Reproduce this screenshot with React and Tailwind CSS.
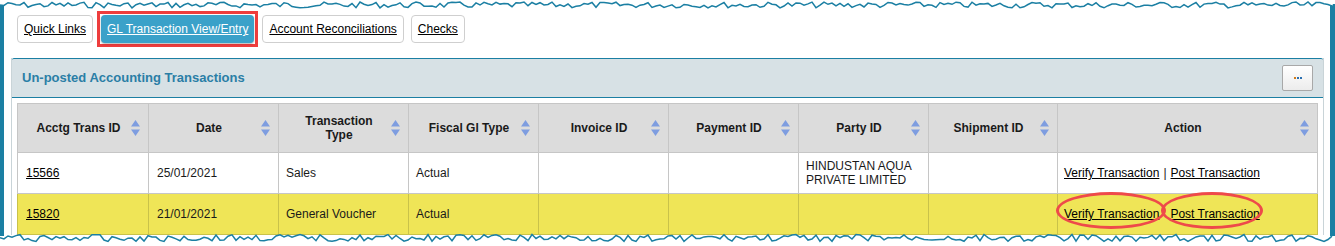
import React from "react";

const teal = "#1b7fa3";

// jagged "torn paper" line, deterministic
const tornPoints = (w, base, amp, seed) => {
  let s = seed;
  const rnd = () => {
    s = (s * 9301 + 49297) % 233280;
    return s / 233280;
  };
  const pts = [];
  for (let x = 0; x <= w; x += 4) {
    pts.push(`${x},${(base + (rnd() - 0.5) * amp).toFixed(1)}`);
  }
  return pts.join(" ");
};

const SortIcon = () => (
  <svg width="9" height="16" viewBox="0 0 9 16" className="shrink-0">
    <path d="M4.5 0 L9 6.5 L0 6.5 Z" fill="#7e9de0" />
    <path d="M0 9.5 L9 9.5 L4.5 16 Z" fill="#7e9de0" />
  </svg>
);

const cols = [
  { label: "Acctg Trans ID", w: "w-[131px]" },
  { label: "Date", w: "w-[130px]" },
  { label: "Transaction Type", w: "w-[130px]", two: true },
  { label: "Fiscal Gl Type", w: "w-[130px]" },
  { label: "Invoice ID", w: "w-[130px]" },
  { label: "Payment ID", w: "w-[130px]" },
  { label: "Party ID", w: "w-[130px]" },
  { label: "Shipment ID", w: "w-[129px]" },
  { label: "Action", w: "w-[260px]" },
];

const rows = [
  { id: "15566", date: "25/01/2021", type: "Sales", gl: "Actual", party: ["HINDUSTAN AQUA", "PRIVATE LIMITED"] },
  { id: "15820", date: "21/01/2021", type: "General Voucher", gl: "Actual", party: [], hl: true },
];

const Tab = ({ children, className = "" }) => (
  <button className={`h-[28px] px-[6px] rounded-[4px] border border-[#cfcfcf] bg-white text-[12px] text-black underline ${className}`}>
    {children}
  </button>
);

export default function App() {
  return (
    <div
      className="relative w-[1335px] h-[246px] bg-white overflow-hidden"
      style={{ fontFamily: "Arial, 'Liberation Sans', sans-serif" }}
    >
      <div className="flex h-full pt-[4px] pb-[10px]">
        <div className="w-[4px] bg-[#1b7fa3]" />
        <div className="flex-1">
          {/* tabs */}
          <div className="flex items-center gap-[4px] pl-[13px] pt-[7px]">
            <Tab>Quick Links</Tab>
            <div className="border-[3px] border-[#ee3d3d] p-[1px]">
              <button className="h-[28px] px-[6px] rounded-[4px] bg-[#3aa1c9] text-[12px] text-white underline shadow-[0_1px_2px_rgba(0,0,0,0.3)]">
                GL Transaction View/Entry
              </button>
            </div>
            <Tab>Account Reconciliations</Tab>
            <Tab className="ml-[3px]">Checks</Tab>
          </div>

          {/* panel */}
          <div className="ml-[7px] mt-[11px] w-[1313px] border-x border-[#c9d4d8]">
            <div className="h-[40px] flex items-center justify-between pl-[10px] pr-[10px] bg-[#d7e1e5] border-y border-[#1b7fa3] rounded-t-[2px]">
              <span className="text-[13px] font-bold text-[#2a7ea6]">Un-posted Accounting Transactions</span>
              <button className="w-[31px] h-[26px] border border-[#a8a8a8] rounded-[2px] bg-gradient-to-b from-white to-[#ececec] flex items-center justify-center">
                <span className="flex gap-[1px]">
                  <span className="w-[2px] h-[2px] bg-[#d07a1a]" />
                  <span className="w-[2px] h-[2px] bg-[#2a6fb0]" />
                  <span className="w-[2px] h-[2px] bg-[#2a6fb0]" />
                </span>
              </button>
            </div>
            <div className="px-[5px] pt-[5px] bg-white">
              <table className="border-collapse text-[12px] text-[#1a1a1a] table-fixed">
                <thead>
                  <tr className="h-[49px] bg-[#dcdcdc]">
                    {cols.map((c) => (
                      <th key={c.label} className={`${c.w} border border-[#c6c6c6] font-bold px-[8px]`}>
                        <div className="flex items-center">
                          <span className="flex-1 text-center leading-[14px]">
                            {c.two ? (
                              <>
                                Transaction
                                <br />
                                Type
                              </>
                            ) : (
                              c.label
                            )}
                          </span>
                          <SortIcon />
                        </div>
                      </th>
                    ))}
                  </tr>
                </thead>
                <tbody>
                  {rows.map((r) => {
                    const b = r.hl ? "border-[#c9c24a]" : "border-[#c6c6c6]";
                    return (
                      <tr key={r.id} className={r.hl ? "h-[41px] bg-[#efe557]" : "h-[41px] bg-white"}>
                        <td className={`border ${b} px-[8px]`}>
                          <a className="underline text-black">{r.id}</a>
                        </td>
                        <td className={`border ${b} px-[8px]`}>{r.date}</td>
                        <td className={`border ${b} px-[7px]`}>{r.type}</td>
                        <td className={`border ${b} px-[7px]`}>{r.gl}</td>
                        <td className={`border ${b}`} />
                        <td className={`border ${b}`} />
                        <td className={`border ${b} px-[7px] leading-[14px]`}>
                          {r.party.map((p) => (
                            <div key={p}>{p}</div>
                          ))}
                        </td>
                        <td className={`border ${b}`} />
                        <td className={`border ${b} px-[6px]`}>
                          {r.hl ? (
                            <div className="flex items-center">
                              <a className="relative underline text-black">
                                Verify Transaction
                                <span className="absolute left-[-8px] top-[-13px] w-[110px] h-[37px] rounded-[50%] border-[3px] border-[#ee4a4a]" />
                              </a>
                              <span className="w-[11px]" />
                              <a className="relative underline text-black">
                                Post Transaction
                                <span className="absolute left-[-9px] top-[-13px] w-[102px] h-[37px] rounded-[50%] border-[3px] border-[#ee4a4a]" />
                              </a>
                            </div>
                          ) : (
                            <div className="flex items-center">
                              <a className="underline text-black">Verify Transaction</a>
                              <span className="px-[4px]">|</span>
                              <a className="underline text-black">Post Transaction</a>
                            </div>
                          )}
                        </td>
                      </tr>
                    );
                  })}
                </tbody>
              </table>
            </div>
          </div>
        </div>
        <div className="w-[6px] bg-white" />
        <div className="w-[5px] bg-[#1b7fa3]" />
      </div>

      {/* torn edges */}
      <svg className="absolute left-0 top-0" width="1335" height="12">
        <polygon points={`0,0 ${tornPoints(1335, 5, 6, 7)} 1335,0`} fill="white" />
        <polyline points={tornPoints(1335, 5, 6, 7)} fill="none" stroke={teal} strokeWidth="1.5" />
      </svg>
      <svg className="absolute left-0 bottom-0" width="1335" height="14">
        <polygon points={`0,14 ${tornPoints(1335, 6, 7, 31)} 1335,14`} fill="white" />
        <polyline points={tornPoints(1335, 6, 7, 31)} fill="none" stroke={teal} strokeWidth="1.5" />
      </svg>
    </div>
  );
}
